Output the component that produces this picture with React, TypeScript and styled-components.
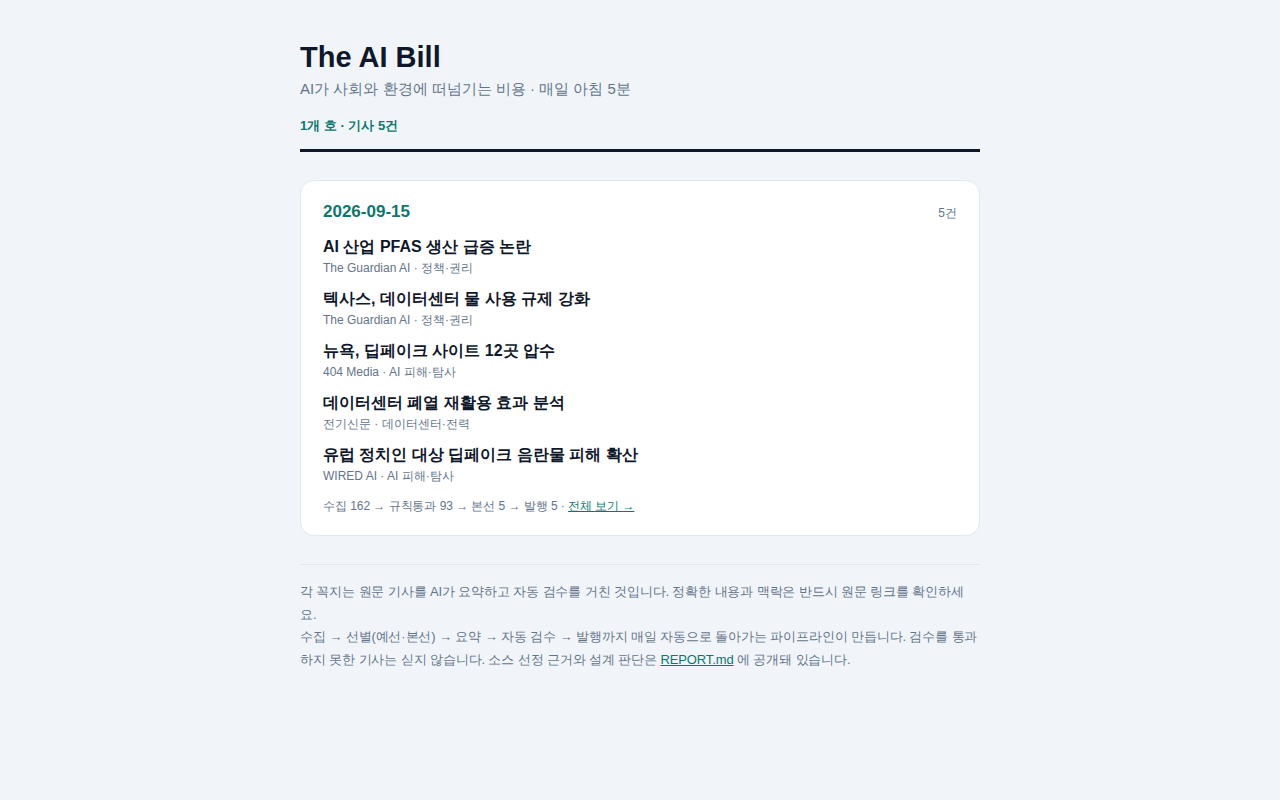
import React from "react";
import styled, { createGlobalStyle } from "styled-components";

const GlobalStyle = createGlobalStyle`
  html, body { margin: 0; padding: 0; background: #f1f5f9; }
  body {
    font-family: "Liberation Sans", Arial, sans-serif;
    color: #0f172a;
  }
  * { box-sizing: border-box; }
`;

const Page = styled.main`
  width: 680px;
  margin: 0 auto;
  padding: 40px 0 60px;
`;

const Header = styled.header`
  padding-bottom: 15px;
  border-bottom: 3px solid #0f172a;
`;

const Title = styled.h1`
  margin: 0;
  font-size: 29px;
  line-height: 34px;
  font-weight: 700;
  color: #0f172a;
`;

const Subtitle = styled.p`
  margin: 5px 0 0;
  font-size: 15px;
  line-height: 20px;
  color: #64748b;
`;

const Meta = styled.p`
  margin: 19px 0 0;
  font-size: 13px;
  line-height: 16px;
  font-weight: 700;
  color: #0f766e;
`;

const Card = styled.section`
  margin-top: 28px;
  background: #ffffff;
  border: 1px solid #e2e8f0;
  border-radius: 14px;
  padding: 20px 22px 20px;
`;

const CardHead = styled.div`
  display: flex;
  justify-content: space-between;
  align-items: baseline;
  margin-bottom: 13px;
`;

const DateLabel = styled.h2`
  margin: 0;
  font-size: 17px;
  line-height: 22px;
  font-weight: 700;
  color: #0f766e;
`;

const Count = styled.span`
  font-size: 12px;
  color: #64748b;
`;

const List = styled.ul`
  list-style: none;
  margin: 0;
  padding: 0;
  display: flex;
  flex-direction: column;
  gap: 11px;
`;

const Item = styled.li`
  display: flex;
  flex-direction: column;
  gap: 2px;
`;

const ItemTitle = styled.a`
  font-size: 16px;
  line-height: 22px;
  font-weight: 700;
  color: #0f172a;
  text-decoration: none;
`;

const ItemMeta = styled.span`
  font-size: 12px;
  line-height: 17px;
  color: #64748b;
`;

const Stats = styled.p`
  margin: 13px 0 0;
  font-size: 12px;
  line-height: 17px;
  letter-spacing: -0.05px;
  color: #64748b;
`;

const Link = styled.a`
  color: #0f766e;
  text-decoration: underline;
`;

const Footer = styled.footer`
  margin-top: 28px;
  padding-top: 16px;
  border-top: 1px solid #e2e8f0;
  font-size: 13px;
  line-height: 22.6px;
  letter-spacing: -0.12px;
  color: #64748b;
`;

const FooterText = styled.p`
  margin: 0;
`;

const items = [
  { title: "AI 산업 PFAS 생산 급증 논란", meta: "The Guardian AI · 정책·권리" },
  { title: "텍사스, 데이터센터 물 사용 규제 강화", meta: "The Guardian AI · 정책·권리" },
  { title: "뉴욕, 딥페이크 사이트 12곳 압수", meta: "404 Media · AI 피해·탐사" },
  { title: "데이터센터 폐열 재활용 효과 분석", meta: "전기신문 · 데이터센터·전력" },
  { title: "유럽 정치인 대상 딥페이크 음란물 피해 확산", meta: "WIRED AI · AI 피해·탐사" },
];

export default function App() {
  return (
    <>
      <GlobalStyle />
      <Page>
        <Header>
          <Title>The AI Bill</Title>
          <Subtitle>AI가 사회와 환경에 떠넘기는 비용 · 매일 아침 5분</Subtitle>
          <Meta>1개 호 · 기사 5건</Meta>
        </Header>
        <Card>
          <CardHead>
            <DateLabel>2026-09-15</DateLabel>
            <Count>5건</Count>
          </CardHead>
          <List>
            {items.map((it) => (
              <Item key={it.title}>
                <ItemTitle href="#">{it.title}</ItemTitle>
                <ItemMeta>{it.meta}</ItemMeta>
              </Item>
            ))}
          </List>
          <Stats>
            수집 162 → 규칙통과 93 → 본선 5 → 발행 5 · <Link href="#">전체 보기 →</Link>
          </Stats>
        </Card>
        <Footer>
          <FooterText>
            각 꼭지는 원문 기사를 AI가 요약하고 자동 검수를 거친 것입니다. 정확한 내용과 맥락은 반드시 원문 링크를 확인하세요.
          </FooterText>
          <FooterText>
            수집 → 선별(예선·본선) → 요약 → 자동 검수 → 발행까지 매일 자동으로 돌아가는 파이프라인이 만듭니다. 검수를 통과하지 못한 기사는 싣지 않습니다. 소스 선정 근거와 설계 판단은 <Link href="#">REPORT.md</Link> 에 공개돼 있습니다.
          </FooterText>
        </Footer>
      </Page>
    </>
  );
}
